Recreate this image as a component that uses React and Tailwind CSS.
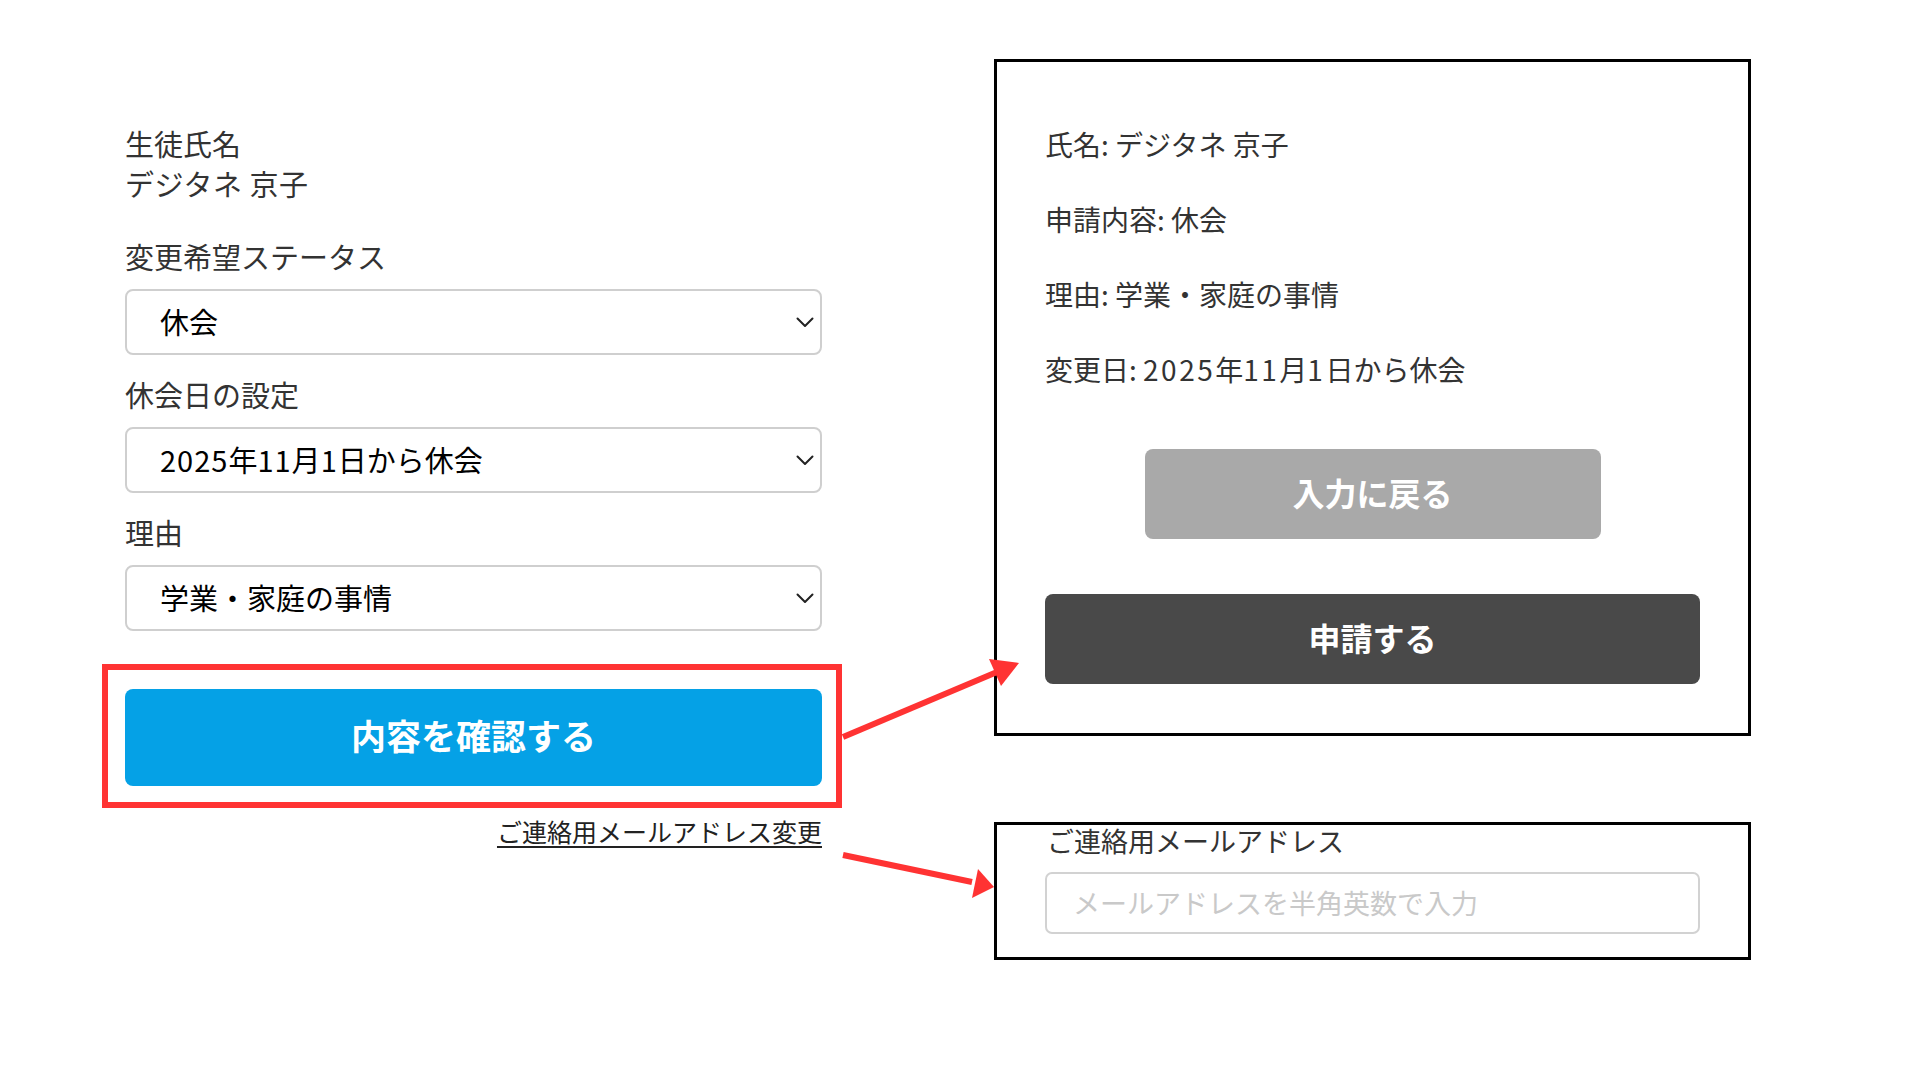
import React from "react";

function Chevron() {
  return (
    <svg width="18" height="11" viewBox="0 0 18 11" className="shrink-0">
      <polyline points="1.5,1.5 9,9 16.5,1.5" fill="none" stroke="#222" strokeWidth="2" strokeLinecap="round" strokeLinejoin="round" />
    </svg>
  );
}

function SelectBox({ children }) {
  return (
    <div className="mt-[13px] flex h-[66px] w-full items-center justify-between rounded-[8px] border-2 border-[#cfcfcf] bg-white pl-[33px] pr-[6px]">
      <span className="pb-[3px] text-[29px] leading-[40px] text-black">{children}</span>
      <Chevron />
    </div>
  );
}

function Label({ children, className = "" }) {
  return <div className={"text-[29px] leading-[40px] text-[#333] " + className}>{children}</div>;
}

export default function App() {
  return (
    <div className="relative h-[1080px] w-[1920px] overflow-hidden bg-white font-['Noto_Sans_CJK_JP','Noto_Sans',sans-serif]">
      <div className="flex items-start pl-[125px]">
        {/* Left column */}
        <div className="mt-[123px] flex w-[697px] flex-col">
          <div className="text-[29px] leading-[40px] text-[#333]">
            <div>生徒氏名</div>
            <div className="tracking-[0.5px]">デジタネ 京子</div>
          </div>
          <Label className="mt-[33px]">変更希望ステータス</Label>
          <SelectBox>休会</SelectBox>
          <Label className="mt-[19px]">休会日の設定</Label>
          <SelectBox>
            <span className="tracking-[1px]">2025</span>年<span className="tracking-[1px]">11</span>月<span className="tracking-[1px]">1</span>日から休会
          </SelectBox>
          <Label className="mt-[19px]">理由</Label>
          <SelectBox>学業・家庭の事情</SelectBox>
          <div className="-ml-[23px] -mr-[20px] mt-[33px] border-[6px] border-[#ff3333] pb-[16px] pl-[17px] pr-[14px] pt-[19px]">
            <button className="flex h-[97px] w-full items-center justify-center rounded-[8px] bg-[#05a1e6] pb-[4px] text-[35px] font-bold text-white">
              内容を確認する
            </button>
          </div>
          <div className="mt-[7px] flex justify-end">
            <span className="text-[25px] leading-[32px] text-[#222] underline underline-offset-[4px]">ご連絡用メールアドレス変更</span>
          </div>
        </div>

        {/* Right column */}
        <div className="ml-[172px] mt-[59px] flex w-[757px] flex-col">
          <div className="flex h-[677px] flex-col border-[3px] border-black px-[48px] pb-[49px] pt-[62px]">
            <div className="flex flex-col gap-[35px] text-[28px] leading-[40px] text-[#333]">
              <div>氏名: デジタネ 京子</div>
              <div>申請内容: 休会</div>
              <div>理由: 学業・家庭の事情</div>
              <div>
                変更日: <span className="tracking-[2.5px]">2025</span>年<span className="tracking-[2.5px]">11</span>月<span className="tracking-[2.5px]">1</span>日から休会
              </div>
            </div>
            <button className="mx-auto mt-[60px] flex h-[90px] w-[456px] items-center justify-center rounded-[8px] bg-[#a9a9a9] pb-[4px] text-[32px] font-bold text-white">
              入力に戻る
            </button>
            <button className="mt-[55px] flex h-[90px] w-full items-center justify-center rounded-[8px] bg-[#494949] pb-[5px] text-[32px] font-bold text-white">
              申請する
            </button>
          </div>
          <div className="mt-[86px] flex h-[138px] flex-col border-[3px] border-black px-[48px] pb-[23px]">
            <div className="-mt-[2px] pl-[2px] text-[27px] leading-[36px] text-[#333]">ご連絡用メールアドレス</div>
            <div className="mt-[13px] flex h-[62px] items-center rounded-[7px] border-2 border-[#d2d2d2] pl-[26px]">
              <span className="text-[27px] leading-[36px] text-[#c9c9c9]">メールアドレスを半角英数で入力</span>
            </div>
          </div>
        </div>
      </div>

      {/* Annotation arrows */}
      <svg className="pointer-events-none absolute left-0 top-0" width="1920" height="1080" viewBox="0 0 1920 1080">
        <line x1="843" y1="737" x2="997" y2="672" stroke="#ff3333" strokeWidth="6" />
        <polygon points="1019,663 1001,686 989,659" fill="#ff3333" />
        <line x1="843" y1="855" x2="972" y2="882" stroke="#ff3333" strokeWidth="6" />
        <polygon points="994,887 972,898 978,869" fill="#ff3333" />
      </svg>
    </div>
  );
}
